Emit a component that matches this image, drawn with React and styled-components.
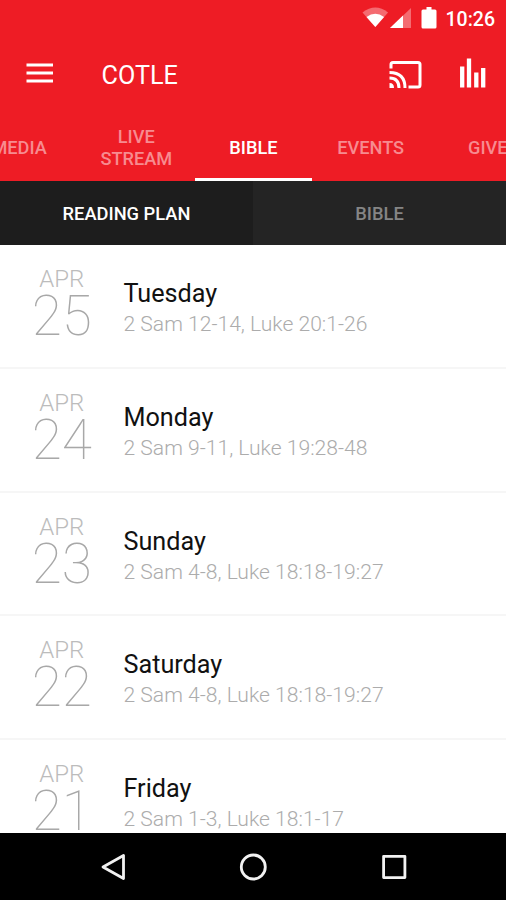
import React from "react";
import styled, { createGlobalStyle } from "styled-components";

const Global = createGlobalStyle`
  * { box-sizing: border-box; }
  body { margin: 0; font-family: Roboto, sans-serif; background: #fff; }
`;
const Screen = styled.div`
  width: 506px; height: 900px; overflow: hidden;
  display: flex; flex-direction: column;
`;
const Header = styled.header`
  flex: none; height: 181px; background: #ee1c25; color: #fff;
  display: flex; flex-direction: column;
`;
const StatusBar = styled.div`
  height: 36px; display: flex; justify-content: flex-end; align-items: center;
  padding: 2px 11px 0 0; font-size: 19.5px; font-weight: 500;
`;
const StatusIcons = styled.svg`
  width: 76px; height: 24px; margin: 0 8px 2px 0; flex: none;
`;
const Toolbar = styled.div`
  height: 77px; display: flex; align-items: center; padding: 0 18px 0 26px;
`;
const MenuIcon = styled.svg`width: 28px; height: 24px; margin-bottom: 3px;`;
const Title = styled.h1`
  margin: 0 auto 0 47.5px; padding-top: 2px; font-size: 25.2px; font-weight: 400; line-height: 30px;
`;
const Actions = styled.svg`width: 100px; height: 34px;`;
const Tabs = styled.nav`
  height: 68px; margin-left: -39.5px; display: grid;
  grid-template-columns: repeat(5, 117.2px);
`;
const Tab = styled.div`
  display: flex; align-items: center; justify-content: center; text-align: center;
  padding-top: 4px;
  font-size: 18.2px; line-height: 22px; font-weight: 500;
  color: ${p => (p.$active ? "#fff" : "#f78b90")};
  border-bottom: 3px solid ${p => (p.$active ? "#fff" : "transparent")};
  white-space: pre;
`;
const SubTabs = styled.div`height: 64px; flex: none; display: flex; background: #242424;`;
const SubTab = styled.div`
  flex: 1; display: flex; align-items: center; justify-content: center;
  font-size: 18.3px; font-weight: 500;
  color: ${p => (p.$active ? "#fff" : "#858585")};
  background: ${p => (p.$active ? "#1d1d1d" : "#242424")};
`;
const List = styled.main`flex: 1; overflow: hidden;`;
const Row = styled.div`
  height: 123.8px; display: flex; border-bottom: 2px solid #f6f6f6;
`;
const DateBlock = styled.div`
  width: 123.5px; padding-top: 20px; text-align: center; color: #bcbcbc;
`;
const Month = styled.div`font-size: 24px; line-height: 28px; font-weight: 300;`;
const Day = styled.div`font-size: 55px; line-height: 46px; font-weight: 100; color: #a8a8a8;`;
const Body = styled.div`padding-top: 33px;`;
const Weekday = styled.div`font-size: 25.2px; line-height: 32px; color: #111;`;
const Passage = styled.div`
  font-size: 21.1px; line-height: 27px; font-weight: 300; color: #acacac;
`;
const NavBar = styled.footer`
  flex: none; height: 67px; background: #000;
  display: flex; justify-content: center; align-items: center; gap: 112.5px;
`;
const NavIcon = styled.svg`
  width: 28px; height: 28px; fill: none; stroke: #f2f2f2; stroke-width: 2.8;
  stroke-linejoin: round;
`;

const rows = [
  ["25", "Tuesday", "2 Sam 12-14, Luke 20:1-26"],
  ["24", "Monday", "2 Sam 9-11, Luke 19:28-48"],
  ["23", "Sunday", "2 Sam 4-8, Luke 18:18-19:27"],
  ["22", "Saturday", "2 Sam 4-8, Luke 18:18-19:27"],
  ["21", "Friday", "2 Sam 1-3, Luke 18:1-17"],
];

export default function App() {
  return (
    <Screen>
      <Global />
      <Header>
        <StatusBar>
          <StatusIcons viewBox="362 6 76 24" fill="#fff">
            <path d="M362.5 12.5q12.8-10 25.6 0L375.3 27z" opacity=".35" />
            <path d="M366.5 17q8.8-6.5 17.6 0L375.3 27z" />
            <path d="M411 8v20h-21z" opacity=".35" />
            <path d="M403 15.6V28h-13z" />
            <path d="M423 9.5h3.5V7h5v2.5h3.5q1.5 0 1.5 1.5v16q0 1.5-1.5 1.5h-12q-1.5 0-1.5-1.5v-16q0-1.5 1.5-1.5z" />
          </StatusIcons>
          10:26
        </StatusBar>
        <Toolbar>
          <MenuIcon viewBox="0 0 28 24" stroke="#fff" strokeWidth="3.2">
            <path d="M.5 4h26.5M.5 12h26.5M.5 20h26.5" />
          </MenuIcon>
          <Title>COTLE</Title>
          <Actions viewBox="388 57.5 100 34" fill="none" stroke="#fff" strokeWidth="3">
            <path d="M391 68v-4q0-2 2-2h25q2 0 2 2v20.5q0 2-2 2h-9.5" />
            <path d="M389.5 72q15.5 0 15.5 15.5M389.5 77.5q9.5 0 9.5 10" />
            <path d="M389.5 82.5q4.5 0 4.5 5h-4.5z" fill="#fff" stroke="none" />
            <path d="M462.2 66v21M469 58v29M476.3 72v15M483.2 67.5V87" strokeWidth="4.3" />
          </Actions>
        </Toolbar>
        <Tabs>
          <Tab>MEDIA</Tab><Tab>{"LIVE\nSTREAM"}</Tab><Tab $active>BIBLE</Tab><Tab>EVENTS</Tab><Tab>GIVE</Tab>
        </Tabs>
      </Header>
      <SubTabs><SubTab $active>READING PLAN</SubTab><SubTab>BIBLE</SubTab></SubTabs>
      <List>
        {rows.map(([day, name, text]) => (
          <Row key={day}>
            <DateBlock><Month>APR</Month><Day>{day}</Day></DateBlock>
            <Body><Weekday>{name}</Weekday><Passage>{text}</Passage></Body>
          </Row>
        ))}
      </List>
      <NavBar>
        <NavIcon viewBox="0 0 28 28"><path d="M24.5 2.5v23L4 14z" /></NavIcon>
        <NavIcon viewBox="0 0 28 28"><circle cx="14.3" cy="14" r="12" /></NavIcon>
        <NavIcon viewBox="0 0 28 28"><rect x="3.6" y="3.3" width="21.3" height="21.3" /></NavIcon>
      </NavBar>
    </Screen>
  );
}
